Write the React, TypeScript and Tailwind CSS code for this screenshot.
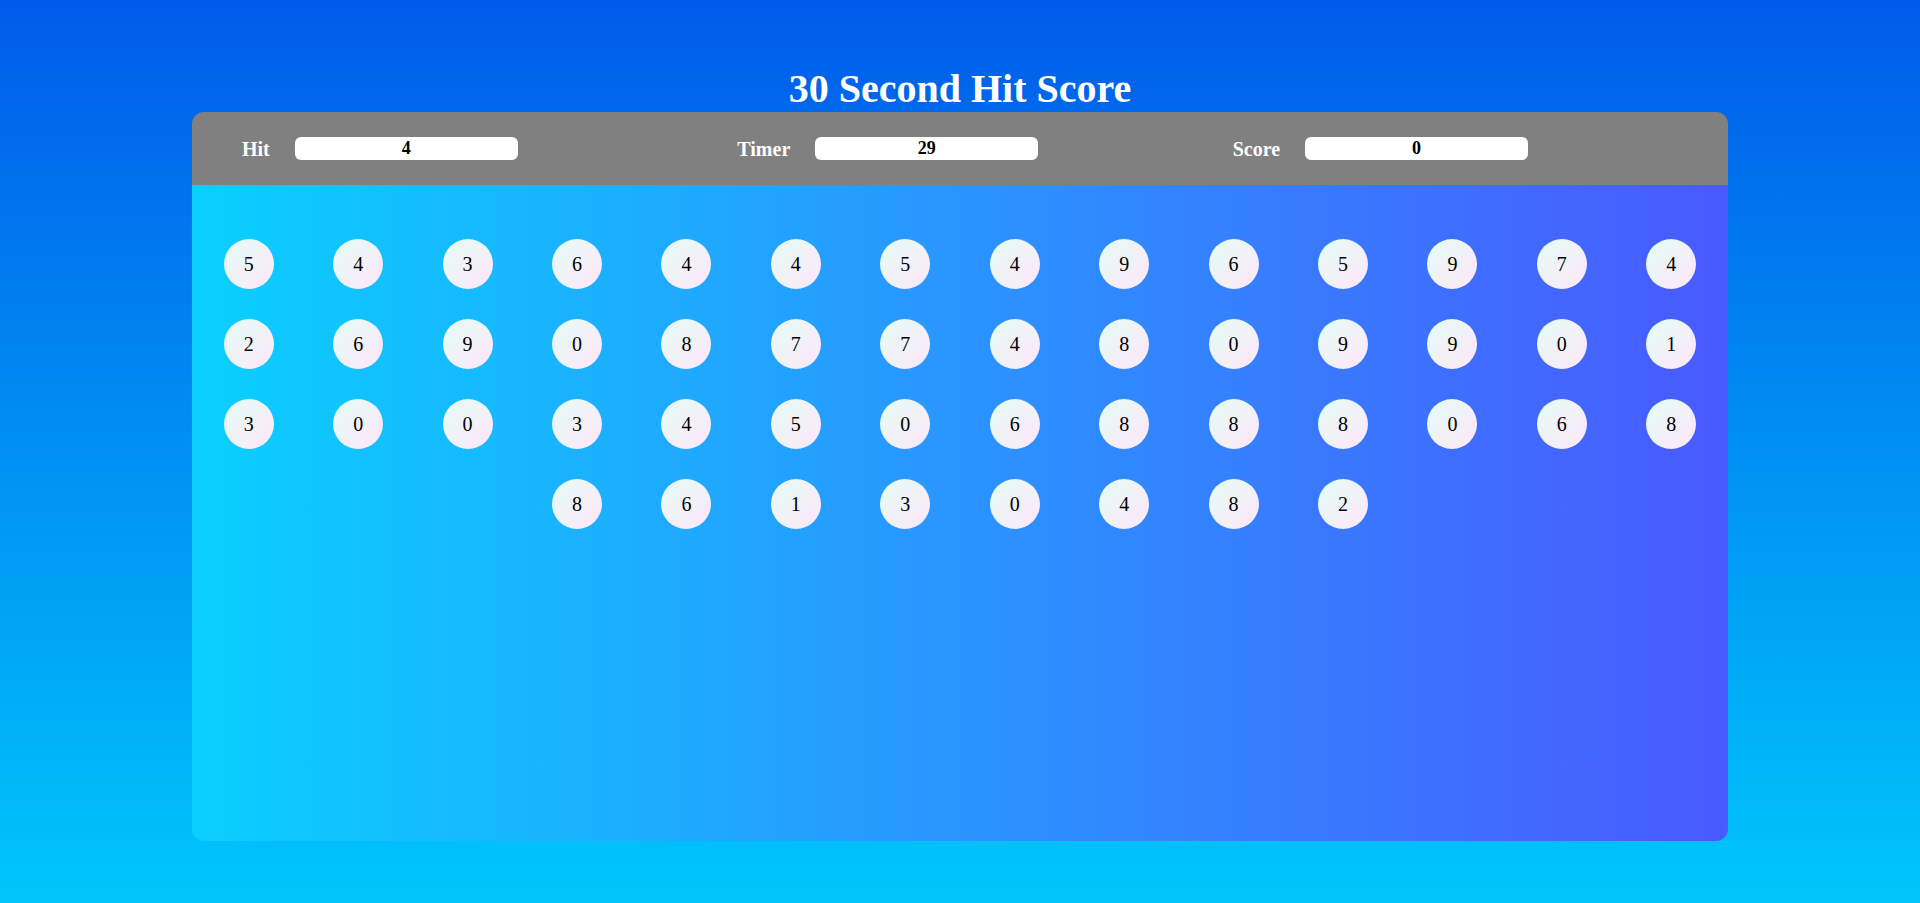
import React, { useState } from "react";

const ROWS = ["54364454965974", "26908774809901", "30034506888068", "86130482"];

const BUBBLES = ROWS.join("").split("");

function Field({ id, label, value }: { id: string; label: string; value: string }) {
  return (
    <div className="flex items-center gap-[25px]">
      <label htmlFor={id} className="text-xl leading-6 -my-1 font-bold text-white">
        {label}
      </label>
      <input
        id={id}
        type="text"
        readOnly
        value={value}
        className="h-[23px] w-[45%] rounded-md bg-white pb-px text-center text-lg leading-[22px] font-bold text-black outline-none"
      />
    </div>
  );
}

export default function App() {
  const [score] = useState(0);

  return (
    <div className="min-h-screen bg-linear-to-b/srgb from-[#005bea] to-[#00c6fb] pt-[66px] pb-[62px] font-['Liberation_Serif',serif]">
      <h1 className="text-center text-[40px] leading-[46px] font-bold text-white">30 Second Hit Score</h1>
      <main className="mx-auto w-4/5 overflow-hidden rounded-xl">
        <header className="grid grid-cols-3 bg-[#808080] py-[25px] pl-[50px]">
          <Field id="hit" label="Hit" value="4" />
          <Field id="timer" label="Timer" value="29" />
          <Field id="score" label="Score" value={String(score)} />
        </header>
        <section className="min-h-[656px] bg-linear-to-r/srgb from-[#0acffe] to-[#495aff] px-[2px] pt-[39px]">
          <div className="flex flex-wrap justify-center">
            {BUBBLES.map((n, i) => (
              <div key={i} className="flex w-1/14 justify-center py-[15px]">
                <button
                  type="button"
                  className="size-[50px] cursor-pointer rounded-full bg-[linear-gradient(135deg,#e3fdf5_0%,#ffe6fa_100%)] text-xl leading-6 text-black"
                >
                  {n}
                </button>
              </div>
            ))}
          </div>
        </section>
      </main>
    </div>
  );
}
